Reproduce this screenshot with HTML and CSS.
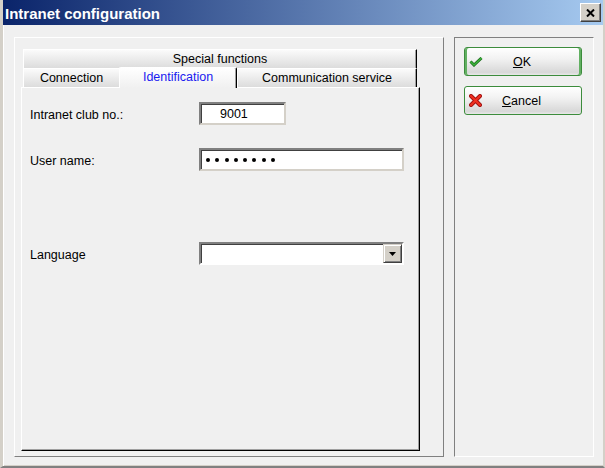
FILE: index.html
```html
<!DOCTYPE html>
<html lang="en">
<head>
    <meta charset="UTF-8">
    <meta name="viewport" content="width=device-width, initial-scale=1.0">
    <title>Intranet configuration</title>
    <link rel="stylesheet" href="styles.css">
</head>
<body>
    <div class="window">
        <div class="titlebar">
            <span class="title">Intranet configuration</span>
            <span class="close">
                <svg width="9" height="8" viewBox="0 0 9 8"><path d="M1 0.5 L8 7.5 M8 0.5 L1 7.5" stroke="#000" stroke-width="2"/></svg>
            </span>
        </div>

        <div class="client">
            <!-- left: tab pages -->
            <div class="group group-main">
                <div class="tabs">
                    <div class="tab-row">
                        <div class="tab tab-special">Special functions</div>
                    </div>
                    <div class="tab-row tab-row-front">
                        <div class="tab tab-conn">Connection</div>
                        <div class="tab tab-active">Identification</div>
                        <div class="tab tab-comm">Communication service</div>
                    </div>
                    <div class="panel">
                        <div class="field field-club">
                            <span class="label">Intranet club no.:</span>
                            <div class="edit edit-club">9001</div>
                        </div>
                        <div class="field field-user">
                            <span class="label">User name:</span>
                            <div class="edit edit-user">
                                <span class="dot"></span><span class="dot"></span><span class="dot"></span><span class="dot"></span>
                                <span class="dot"></span><span class="dot"></span><span class="dot"></span><span class="dot"></span>
                            </div>
                        </div>
                        <div class="field field-lang">
                            <span class="label">Language</span>
                            <div class="combo">
                                <span class="combo-btn">
                                    <svg width="7" height="4" viewBox="0 0 7 4"><path d="M0 0 H7 L3.5 4 Z" fill="#000"/></svg>
                                </span>
                            </div>
                        </div>
                    </div>
                </div>
            </div>

            <!-- right: buttons -->
            <div class="group group-side">
                <button class="btn btn-default">
                    <svg class="btn-icon" width="14" height="10" viewBox="0 0 14 10"><path d="M1.5 4.5 L5 8 L12.5 1" fill="none" stroke="#1d6e1d" stroke-width="3"/><path d="M1.5 4.5 L5 8 L12.5 1" fill="none" stroke="#3cb43c" stroke-width="1.4"/></svg>
                    <span class="btn-text"><u>O</u>K</span>
                </button>
                <button class="btn">
                    <svg class="btn-icon" width="13" height="13" viewBox="0 0 13 13"><path d="M2 2 L11 11 M11 2 L2 11" stroke="#a01010" stroke-width="4" stroke-linecap="round"/><path d="M2 2 L11 11 M11 2 L2 11" stroke="#f03020" stroke-width="2.2" stroke-linecap="round"/></svg>
                    <span class="btn-text"><u>C</u>ancel</span>
                </button>
            </div>
        </div>
    </div>
</body>
</html>
```

FILE: styles.css
```css
*{margin: 0; padding: 0; box-sizing: border-box;}
body{width: 605px; height: 468px; overflow: hidden; background: #f0f0f0; font-family: "Liberation Sans", Arial, sans-serif; font-size: 12.5px; color: #000;}

.window{width: 605px; height: 468px; display: flex; flex-direction: column; background: #f0f0f0; border-left: 3px solid #d4d0c8; border-right: 2px solid #d4d0c8; border-bottom: 2px solid #808080; box-shadow: inset 1px 0 #fff, inset 0 -1px #d4d0c8;}

.titlebar{height: 25px; display: flex; align-items: center; justify-content: space-between; padding: 0 2px 0 2px; background: linear-gradient(to right, #0a246a, #a6caf0);}
.title{font-weight: bold; font-size: 15px; color: #fff; line-height: 25px; padding-top: 1px;}
.close{width: 21px; height: 19px; display: flex; align-items: center; justify-content: center; background: #d4d0c8; border: 1px solid; border-color: #fff #404040 #404040 #fff; box-shadow: inset -1px -1px #808080;}

.client{flex: 1; display: flex; gap: 10px; padding: 12px 9px 9px 11px;}

.group{border: 1px solid;}
.group-main{width: 430px; border-color: #fff #808080 #808080 #fff; padding: 11px 0 3px 6px;}
.group-side{flex: 1; border-color: #808080 #fff #fff #808080; padding: 9px 0 0 9px; display: flex; flex-direction: column; gap: 10px;}

/* tab control */
.tabs{width: 399px; height: 402px; display: flex; flex-direction: column;}
.tab-row{display: flex; height: 19px; padding: 0 3px 0 2px; align-items: flex-end;}
.tab{height: 19px; display: flex; align-items: center; justify-content: center; background: linear-gradient(#fbfbfb, #dcdcdc); border-top: 1px solid #fff; border-left: 1px solid #fff; border-right: 1px solid #000; box-shadow: inset -1px 0 #a0a0a0;}
.tab-special{flex: 1;}
.tab-conn{width: 96px; border-right: none; box-shadow: none;}
.tab-active{width: 118px; height: 21px; margin-bottom: -1px; position: relative; z-index: 1; color: #1a1af0; background: linear-gradient(#ffffff, #f0f0f0); border-radius: 2px 2px 0 0; align-items: flex-start; padding-top: 2px;}
.tab-comm{flex: 1;}

.panel{flex: 1; background: #f0f0f0; border: 1px solid; border-color: #fff #000 #000 #fff; box-shadow: inset -1px -1px #a0a0a0; padding: 14px 0 0 8px;}

.field{display: flex; align-items: center;}
.label{width: 169px; padding-top: 2px;}
.field-user{margin-top: 23px;}
.field-lang{margin-top: 71px;}

.edit{height: 23px; background: #fff; border: 2px solid; box-shadow: inset 1px 1px #404040; display: flex; align-items: center;}
.edit-club{width: 87px; padding-left: 19px; border-color: #808080 #d4d0c8 #d4d0c8 #808080;}
.edit-user{width: 205px; padding-left: 5px; gap: 5.3px; border-color: #808080 #d4d0c8 #d4d0c8 #808080;}
.dot{width: 4px; height: 4px; border-radius: 50%; background: #000;}

.combo{width: 205px; height: 23px; background: #fff; border: 2px solid; border-color: #808080 #fff #fff #808080; box-shadow: inset 1px 1px #404040; display: flex; justify-content: flex-end;}
.combo-btn{width: 19px; height: 19px; display: flex; align-items: center; justify-content: center; background: #d4d0c8; border: 1px solid; border-color: #d4d0c8 #404040 #404040 #d4d0c8; box-shadow: inset 1px 1px #fff, inset -1px -1px #808080;}

/* buttons */
.btn{width: 118px; height: 29px; display: flex; align-items: center; padding-left: 4px; border: 1px solid #3c8c3c; border-radius: 3px; background: linear-gradient(#ffffff, #f2f2f2 40%, #d8d8d8 90%, #e8e8e8); box-shadow: inset 0 1px #fff; font-family: inherit; font-size: 12.5px; color: #000;}
.btn-default{box-shadow: inset 2px 0 #62b062, inset -2px 0 #62b062, inset 0 1px #fff;}
.btn-icon{flex: none;}
.btn-text{flex: 1; text-align: center; padding-right: 20px;}
```
